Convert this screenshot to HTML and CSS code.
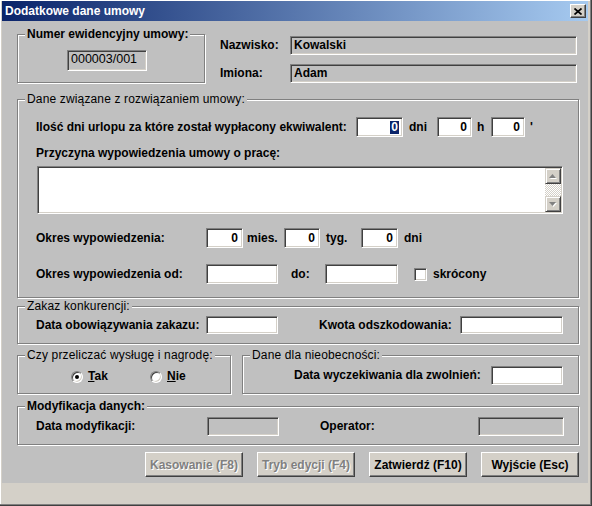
FILE: index.html
```html
<!DOCTYPE html>
<html lang="pl">
<head>
<meta charset="utf-8">
<title>Dodatkowe dane umowy</title>
<link rel="stylesheet" href="styles.css">
</head>
<body>
<div class="window">
  <div class="titlebar">
    <span class="title">Dodatkowe dane umowy</span>
    <span class="close"><svg width="8" height="7" viewBox="0 0 8 7"><path d="M0.5 0.5 L7.5 6.5 M7.5 0.5 L0.5 6.5" stroke="#000" stroke-width="1.7" fill="none"/></svg></span>
  </div>
  <div class="client">
    <div class="row1">
      <div class="group g-numer">
        <span class="legend bold">Numer ewidencyjny umowy:</span>
        <div class="field ro numer">000003/001</div>
      </div>
      <div class="names">
        <div class="line"><span class="lab w-name">Nazwisko:</span><div class="field ro name">Kowalski</div></div>
        <div class="line"><span class="lab w-name">Imiona:</span><div class="field ro name">Adam</div></div>
      </div>
    </div>

    <div class="group g-rozw">
      <span class="legend">Dane związane z rozwiązaniem umowy:</span>
      <div class="line h20">
        <span class="lab w-urlop">Ilość dni urlopu za które został wypłacony ekwiwalent:</span>
        <div class="field num w47"><span class="sel">0</span></div>
        <span class="unit u-dni">dni</span>
        <div class="field num w35">0</div>
        <span class="unit u-h">h</span>
        <div class="field num w34">0</div>
        <span class="unit u-min">'</span>
      </div>
      <div class="lab block przyczyna">Przyczyna wypowiedzenia umowy o pracę:</div>
      <div class="memo">
        <div class="scrollbar">
          <div class="sbtn"><svg width="8" height="5" viewBox="0 0 8 5"><polygon points="4.5,1 8,5 1,5" fill="#fff"/><polygon points="3.5,0 7,4 0,4" fill="#808080"/></svg></div>
          <div class="track"></div>
          <div class="sbtn"><svg width="8" height="5" viewBox="0 0 8 5"><polygon points="1,1 8,1 4.5,5" fill="#fff"/><polygon points="0,0 7,0 3.5,4" fill="#808080"/></svg></div>
        </div>
      </div>
      <div class="line h20 r3">
        <span class="lab w170">Okres wypowiedzenia:</span>
        <div class="field num w37">0</div>
        <span class="unit u-mies">mies.</span>
        <div class="field num w36">0</div>
        <span class="unit u-tyg">tyg.</span>
        <div class="field num w37">0</div>
        <span class="unit u-dni2">dni</span>
      </div>
      <div class="line h20 r4">
        <span class="lab w170">Okres wypowiedzenia od:</span>
        <div class="field w72"></div>
        <span class="unit u-do">do:</span>
        <div class="field w73"></div>
        <span class="chk"></span>
        <span class="unit u-skr">skrócony</span>
      </div>
    </div>

    <div class="group g-zakaz">
      <span class="legend">Zakaz konkurencji:</span>
      <div class="line">
        <span class="lab w170">Data obowiązywania zakazu:</span>
        <div class="field w72 h18"></div>
        <span class="lab w-kwota">Kwota odszkodowania:</span>
        <div class="field w103 h18"></div>
      </div>
    </div>

    <div class="twin">
      <div class="group g-czy">
        <span class="legend">Czy przeliczać wysługę i nagrodę:</span>
        <div class="line">
          <label class="opt"><span class="radio checked"></span><span class="lab"><u>T</u>ak</span></label>
          <label class="opt"><span class="radio"></span><span class="lab"><u>N</u>ie</span></label>
        </div>
      </div>
      <div class="group g-nieob">
        <span class="legend">Dane dla nieobecności:</span>
        <div class="line">
          <span class="lab w197">Data wyczekiwania dla zwolnień:</span>
          <div class="field w72 h19"></div>
        </div>
      </div>
    </div>

    <div class="group g-mod">
      <span class="legend bold">Modyfikacja danych:</span>
      <div class="line">
        <span class="lab w171">Data modyfikacji:</span>
        <div class="field ro w72 h19"></div>
        <span class="lab w-oper">Operator:</span>
        <div class="field ro w86 h19"></div>
      </div>
    </div>

    <div class="buttons">
      <button class="btn" disabled>Kasowanie (F8)</button>
      <button class="btn" disabled>Tryb edycji (F4)</button>
      <button class="btn">Zatwierdź (F10)</button>
      <button class="btn">Wyjście (Esc)</button>
    </div>
  </div>
</div>
</body>
</html>
```

FILE: styles.css
```css
html, body {
  margin: 0;
  padding: 0;
  background: #D4D0C8;
}

.window {
  width: 592px;
  height: 506px;
  box-sizing: border-box;
  padding: 1px 4px 2px 2px;
  background: #D4D0C8;
  box-shadow: inset -1px -1px 0 #404040, inset -2px -2px 0 #808080, inset 1px 1px 0 #fff;
  font-family: "Liberation Sans", Arial, sans-serif;
  font-size: 12px;
  color: #000;
}

.titlebar {
  height: 20px;
  display: flex;
  align-items: center;
  justify-content: space-between;
  background: linear-gradient(to right, #0A246A, #A6CAF0);
}

.title {
  font-weight: bold;
  font-size: 12px;
  color: #fff;
  padding-left: 3px;
  white-space: nowrap;
}

.close {
  width: 16px;
  height: 14px;
  box-sizing: border-box;
  margin-right: 2px;
  background: #D4D0C8;
  border: 1px solid;
  border-color: #fff #404040 #404040 #fff;
  box-shadow: inset -1px -1px 0 #808080;
  display: flex;
  align-items: center;
  justify-content: center;
}

.client {
  height: 462px;
  box-sizing: border-box;
  padding: 13px 9px 0 15px;
  background: #C0C0C0;
  overflow: hidden;
}

/* group boxes */
.group {
  position: relative;
  box-sizing: border-box;
  border: 1px solid #808080;
  box-shadow: inset 1px 1px 0 #fff, 1px 1px 0 #fff;
}

.legend {
  position: absolute;
  top: -8px;
  left: 7px;
  padding: 0 2px;
  background: #C0C0C0;
  line-height: 15px;
  white-space: nowrap;
  letter-spacing: 0.15px;
}

.legend.bold {
  font-weight: bold;
  letter-spacing: 0;
}

.lab, .unit {
  font-weight: bold;
  white-space: nowrap;
  line-height: 15px;
}

.line {
  display: flex;
  align-items: center;
}

.h20 { height: 20px; }

/* fields */
.field {
  box-sizing: border-box;
  height: 20px;
  border: 1px solid;
  border-color: #808080 #fff #fff #808080;
  box-shadow: inset 1px 1px 0 #404040, inset -1px -1px 0 #D4D0C8;
  background: #fff;
  padding: 0 3px;
  flex: none;
  white-space: nowrap;
  overflow: hidden;
}

.field.ro { background: #C0C0C0; }

.field.num {
  text-align: right;
  font-weight: bold;
  line-height: 18px;
  padding-right: 4px;
}

.sel {
  background: #0A246A;
  color: #fff;
  display: inline-block;
  line-height: 13px;
  padding: 0 1px;
  margin-right: -1px;
}

.w34 { width: 34px; }
.w35 { width: 35px; }
.w36 { width: 36px; }
.w37 { width: 37px; }
.w47 { width: 47px; }
.w72 { width: 72px; }
.w73 { width: 73px; }
.w86 { width: 86px; }
.w103 { width: 103px; }
.h18 { height: 18px; }
.h19 { height: 19px; }

.w170 { width: 170px; }
.w171 { width: 171px; }
.w197 { width: 197px; }

/* row 1 */
.row1 {
  display: flex;
  align-items: flex-start;
}

.g-numer {
  width: 188px;
  height: 49px;
  padding: 15px 0 0 49px;
}

.field.numer {
  width: 80px;
  height: 21px;
  font-size: 12.5px;
  line-height: 17px;
  padding-left: 3px;
}

.names {
  margin-left: 15px;
  margin-top: 2px;
  display: flex;
  flex-direction: column;
  gap: 9px;
}

.w-name { width: 70px; }

.field.name {
  width: 287px;
  height: 19px;
  font-weight: bold;
  line-height: 17px;
}

/* group: rozwiązanie */
.g-rozw {
  margin-top: 16px;
  height: 199px;
  padding: 17px 0 0 18px;
}

.w-urlop { width: 320px; }
.u-dni { margin-left: 6px; width: 28px; }
.u-h { margin-left: 5px; width: 14px; }
.u-min { margin-left: 5px; }

.przyczyna {
  margin-top: 9px;
}

.memo {
  margin-top: 5px;
  margin-left: 1px;
  width: 526px;
  height: 48px;
  box-sizing: border-box;
  border: 1px solid;
  border-color: #808080 #fff #fff #808080;
  box-shadow: inset 1px 1px 0 #404040, inset -1px -1px 0 #D4D0C8;
  background: #fff;
  padding: 1px;
  display: flex;
  justify-content: flex-end;
}

.scrollbar {
  width: 16px;
  display: flex;
  flex-direction: column;
}

.sbtn {
  height: 16px;
  box-sizing: border-box;
  background: #D4D0C8;
  border: 1px solid;
  border-color: #D4D0C8 #404040 #404040 #D4D0C8;
  box-shadow: inset 1px 1px 0 #fff, inset -1px -1px 0 #808080;
  display: flex;
  align-items: center;
  justify-content: center;
}

.track {
  flex: 1;
  background: repeating-conic-gradient(#fff 0 25%, #D4D0C8 0 50%) 0 0 / 2px 2px;
}

.r3 { margin-top: 14px; }
.r4 { margin-top: 16px; }

.u-mies { margin-left: 4px; width: 37px; }
.u-tyg { margin-left: 6px; width: 35px; }
.u-dni2 { margin-left: 6px; }
.u-do { margin-left: 13px; width: 34px; }
.u-skr { margin-left: 6px; }

.chk {
  margin-left: 16px;
  width: 13px;
  height: 13px;
  box-sizing: border-box;
  border: 1px solid;
  border-color: #808080 #fff #fff #808080;
  box-shadow: inset 1px 1px 0 #404040, inset -1px -1px 0 #D4D0C8;
  background: #fff;
  flex: none;
}

/* group: zakaz */
.g-zakaz {
  margin-top: 8px;
  height: 38px;
  padding: 9px 0 0 18px;
}

.w-kwota { margin-left: 41px; width: 141px; }

/* twin row */
.twin {
  margin-top: 11px;
  display: flex;
  gap: 11px;
}

.g-czy {
  width: 214px;
  height: 39px;
  padding: 13px 0 0 53px;
}

.opt {
  display: flex;
  align-items: center;
  width: 79px;
}

.opt .lab { margin-left: 5px; }

.radio {
  position: relative;
  width: 12px;
  height: 12px;
  box-sizing: border-box;
  border-radius: 50%;
  border: 1px solid;
  border-color: #808080 #fff #fff #808080;
  box-shadow: inset 1px 1px 0 #404040, inset -1px -1px 0 #D4D0C8;
  background: #fff;
  flex: none;
}

.radio.checked::after {
  content: "";
  position: absolute;
  left: 3px;
  top: 3px;
  width: 4px;
  height: 4px;
  border-radius: 50%;
  background: #000;
}

.g-nieob {
  width: 337px;
  height: 39px;
  padding: 10px 0 0 51px;
}

/* group: modyfikacja */
.g-mod {
  margin-top: 12px;
  height: 39px;
  padding: 10px 0 0 18px;
}

.w-oper { margin-left: 41px; width: 158px; }

/* buttons */
.buttons {
  margin-top: 7px;
  display: flex;
  justify-content: flex-end;
  gap: 14px;
}

.btn {
  width: 98px;
  height: 25px;
  box-sizing: border-box;
  margin: 0;
  padding: 0;
  background: #D4D0C8;
  border: 1px solid;
  border-color: #fff #404040 #404040 #fff;
  box-shadow: inset -1px -1px 0 #808080;
  font-family: inherit;
  font-size: 12px;
  font-weight: bold;
  color: #000;
  white-space: nowrap;
}

.btn:disabled {
  color: #808080;
  text-shadow: 1px 1px 0 #fff;
}
```
